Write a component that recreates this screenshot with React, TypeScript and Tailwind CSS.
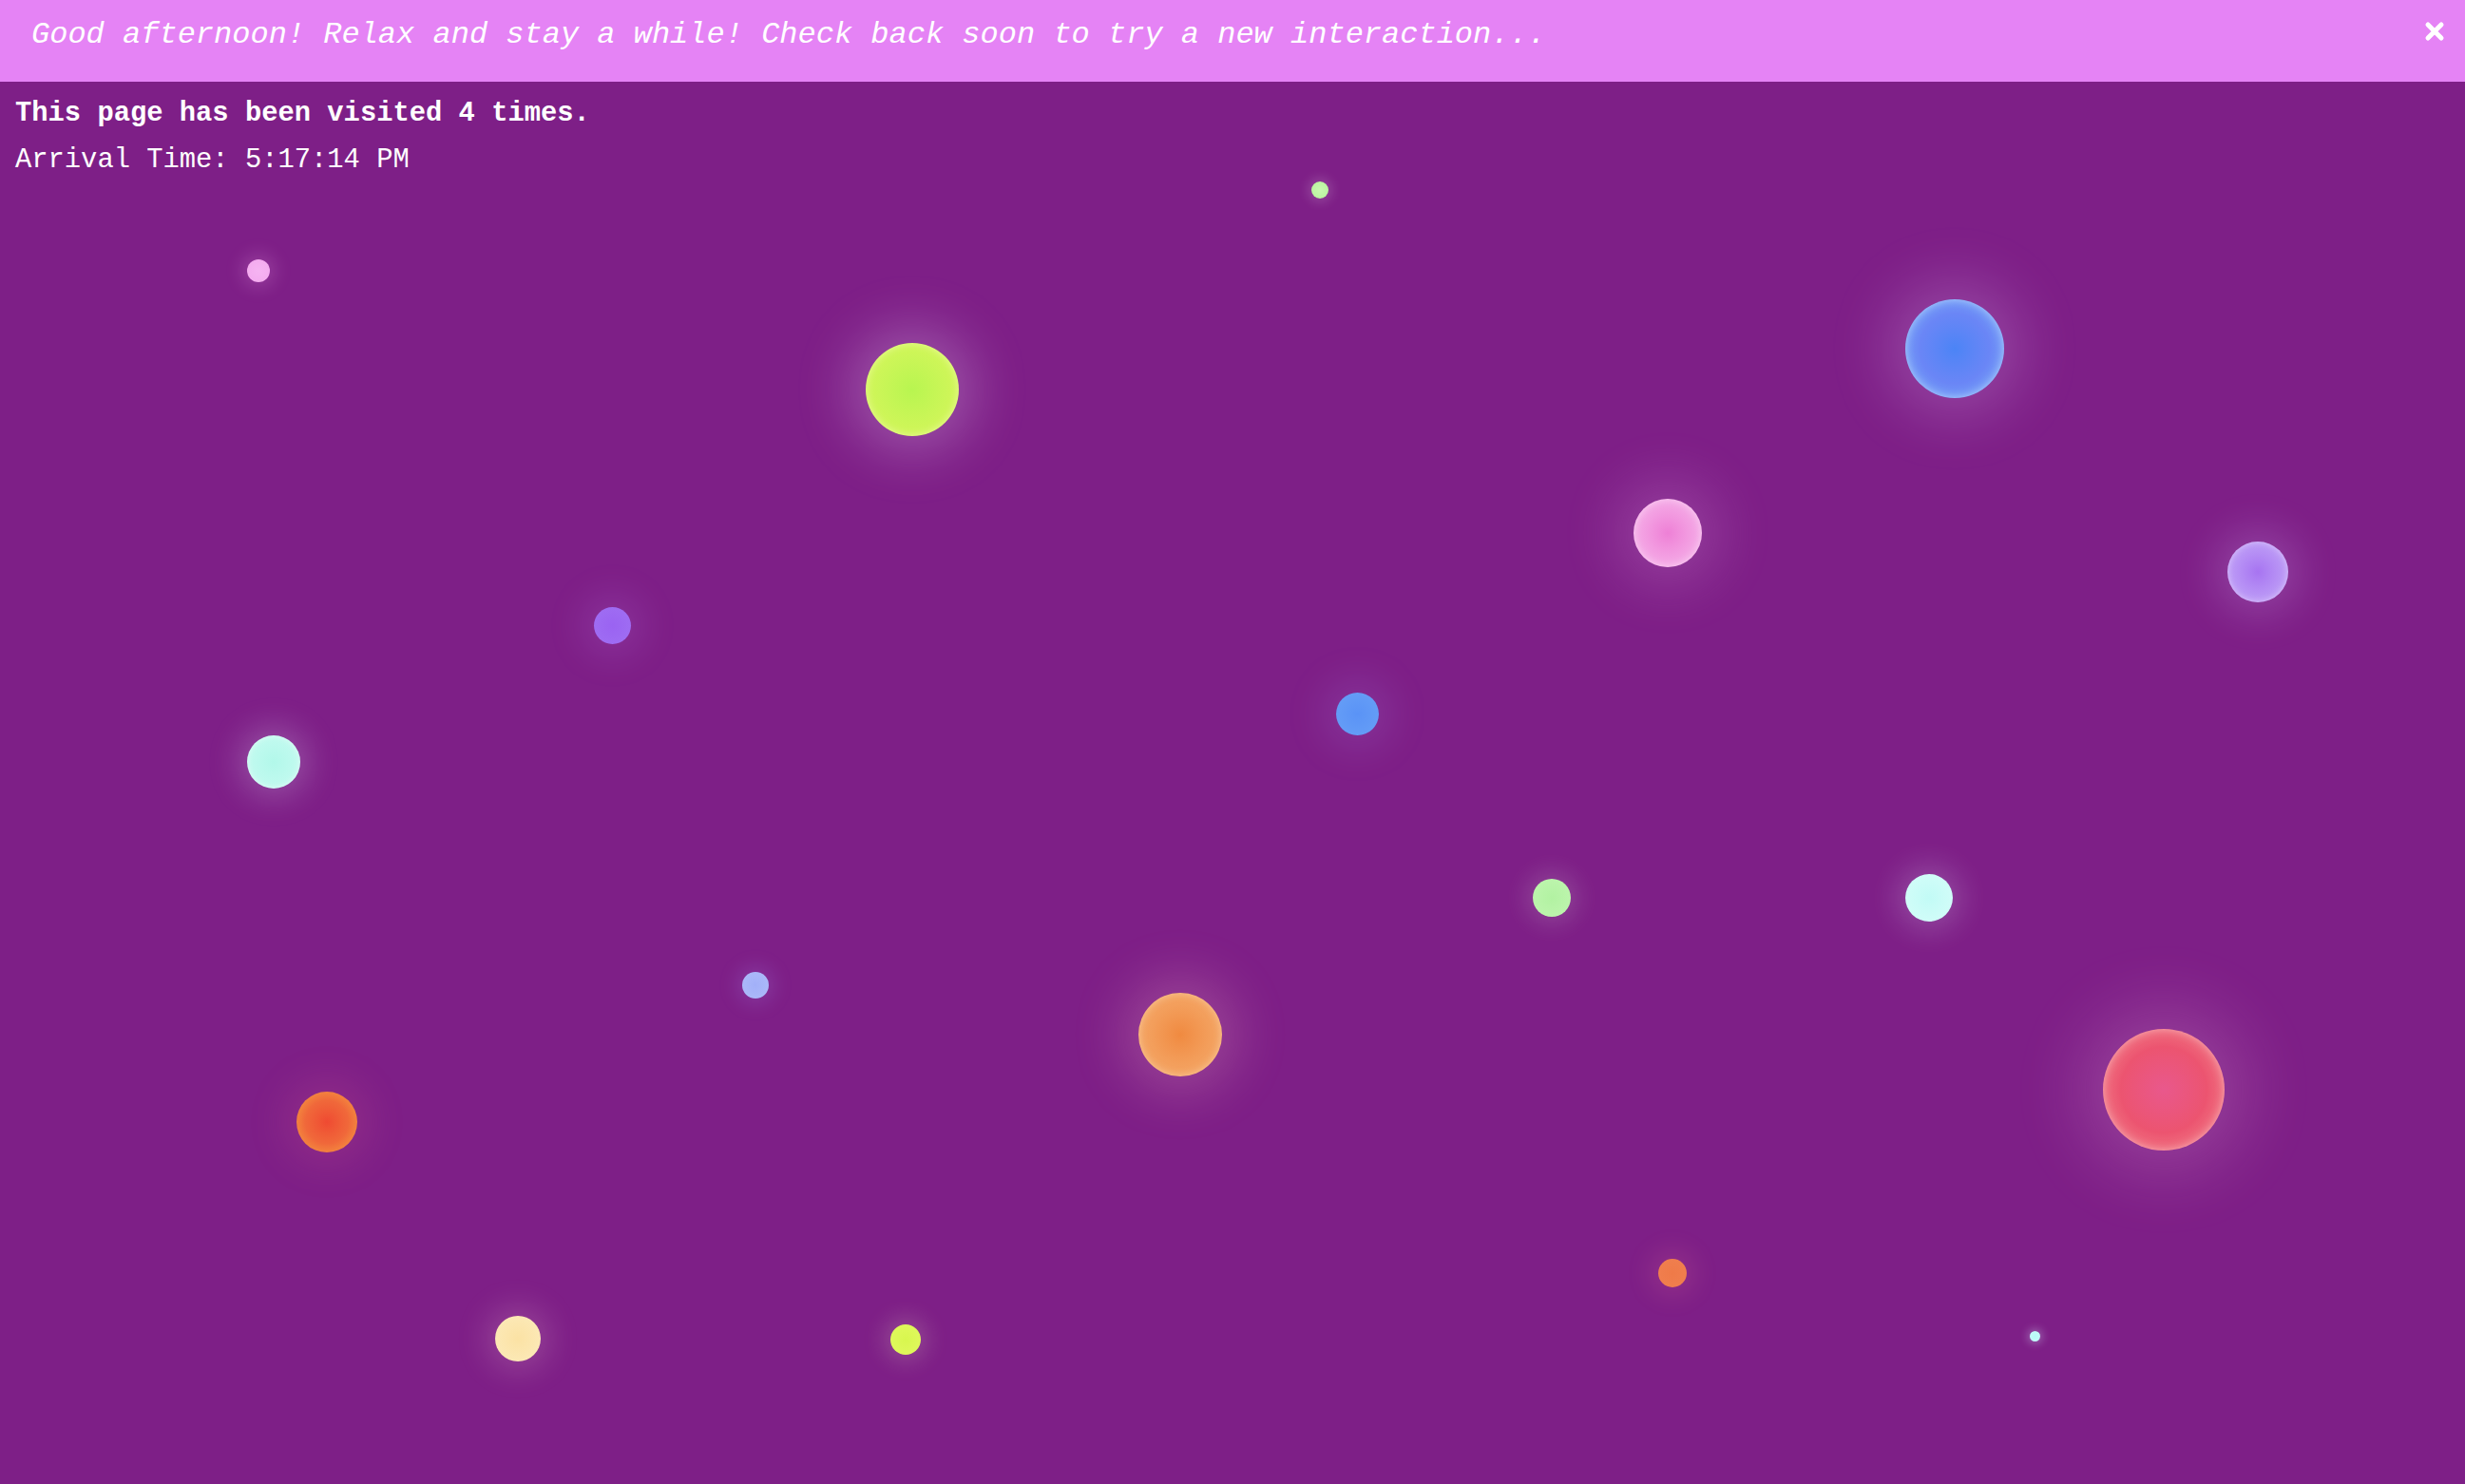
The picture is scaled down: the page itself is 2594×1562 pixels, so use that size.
const mono = "font-['Liberation_Mono','Courier_New',monospace]"

// bubbles on the canvas: left/top are the box corner, size is the diameter
const bubbles = [
    { key: 'green-sm', cls: 'left-[1380px] top-[191px] size-[18px] from-[#c9f8b0] to-[#b5f29a] shadow-[0_0_12px_4px_rgba(255,255,255,0.16)]' },
    { key: 'pink-sm', cls: 'left-[260px] top-[273px] size-[24px] from-[#f6b4f2] to-[#f3a8ee] shadow-[0_0_18px_6px_rgba(255,190,250,0.18)]' },
    { key: 'lime', cls: 'left-[911px] top-[361px] size-[98px] from-[#b8f550] to-[#dcf65e] shadow-[inset_0_0_8px_rgba(255,255,220,0.5),0_0_54px_18px_rgba(240,220,255,0.26)]' },
    { key: 'blue-lg', cls: 'left-[2005px] top-[315px] size-[104px] from-[#4b84f6] via-[#6a86f6] to-[#82b6f6] shadow-[inset_0_0_10px_rgba(200,230,255,0.7),0_0_60px_20px_rgba(230,200,255,0.22)]' },
    { key: 'pink', cls: 'left-[1719px] top-[525px] size-[72px] from-[#ee80d6] to-[#f6bdee] shadow-[inset_0_0_8px_rgba(255,230,250,0.6),0_0_56px_20px_rgba(240,180,240,0.2)]' },
    { key: 'lavender', cls: 'left-[2344px] top-[570px] size-[64px] from-[#a774f1] to-[#c8aef8] shadow-[inset_0_0_7px_rgba(235,220,255,0.6),0_0_40px_14px_rgba(220,190,255,0.2)]' },
    { key: 'violet', cls: 'left-[625px] top-[639px] size-[39px] from-[#9a63f2] to-[#a070f3] shadow-[0_0_36px_14px_rgba(200,150,255,0.15)]' },
    { key: 'blue', cls: 'left-[1406px] top-[729px] size-[45px] from-[#5a93f6] to-[#68a0f6] shadow-[0_0_40px_14px_rgba(180,170,255,0.15)]' },
    { key: 'cyan', cls: 'left-[260px] top-[774px] size-[56px] from-[#b2f8ea] to-[#c8fbf2] shadow-[inset_0_0_6px_rgba(255,255,255,0.5),0_0_32px_10px_rgba(230,230,255,0.22)]' },
    { key: 'green', cls: 'left-[1613px] top-[925px] size-[40px] from-[#b2f2a2] to-[#c0f5b0] shadow-[0_0_24px_8px_rgba(230,240,230,0.16)]' },
    { key: 'ice', cls: 'left-[2005px] top-[920px] size-[50px] from-[#c2fbf6] to-[#d6fdf9] shadow-[0_0_30px_10px_rgba(230,230,255,0.2)]' },
    { key: 'periwinkle', cls: 'left-[781px] top-[1023px] size-[28px] from-[#a2b0f8] to-[#aebcf9] shadow-[0_0_20px_6px_rgba(170,160,255,0.18)]' },
    { key: 'orange', cls: 'left-[1198px] top-[1045px] size-[88px] from-[#f08a40] to-[#f5b274] shadow-[inset_0_0_8px_rgba(255,230,200,0.5),0_0_52px_18px_rgba(250,190,200,0.22)]' },
    { key: 'red', cls: 'left-[2213px] top-[1083px] size-[128px] from-[#e9588c] via-[#ec5470] to-[#f39096] shadow-[inset_0_0_10px_rgba(255,220,220,0.55),0_0_70px_24px_rgba(250,190,230,0.2)]' },
    { key: 'red-orange', cls: 'left-[312px] top-[1149px] size-[64px] from-[#ef4a32] via-[#f0683a] to-[#f4a444] shadow-[0_0_40px_14px_rgba(250,120,140,0.14)]' },
    { key: 'orange-sm', cls: 'left-[1745px] top-[1325px] size-[30px] from-[#ef7a48] to-[#f08050] shadow-[0_0_26px_10px_rgba(255,140,150,0.14)]' },
    { key: 'cream', cls: 'left-[521px] top-[1385px] size-[48px] from-[#fbe2a4] to-[#fcebbc] shadow-[0_0_32px_10px_rgba(255,220,220,0.18)]' },
    { key: 'yellow', cls: 'left-[937px] top-[1394px] size-[32px] from-[#d8f64e] to-[#e2f860] shadow-[0_0_22px_8px_rgba(240,240,200,0.18)]' },
    { key: 'cyan-xs', cls: 'left-[2136px] top-[1401px] size-[11px] from-[#b6faf7] to-[#c8fcfa] shadow-[0_0_8px_3px_rgba(220,240,255,0.28)]' },
]

export default function App() {
    return (
        <div className={`relative min-h-screen h-[1562px] overflow-hidden bg-[#7e1f87] text-white ${mono}`}>
            <div className="absolute inset-0 pointer-events-none">
                {bubbles.map((b) => (
                    <div key={b.key} className={`absolute rounded-full bg-radial ${b.cls}`} />
                ))}
            </div>

            <div className="relative h-[86px] bg-[#e583f5] pl-[33px] pt-[19px]">
                <p className="text-[32px] leading-[36px] italic">
                    Good afternoon! Relax and stay a while! Check back soon to try a new interaction...
                </p>
                <button className="absolute right-[21px] top-[22px] w-[22px] h-[22px] flex items-center justify-center">
                    <svg viewBox="0 0 22 22" className="w-[22px] h-[22px]">
                        <path d="M4 4 L18 18 M18 4 L4 18" stroke="white" strokeWidth="5" strokeLinecap="round" fill="none" />
                    </svg>
                </button>
            </div>

            <div className="relative flex flex-col gap-[16px] pl-[16px] pt-[17px]">
                <p className="text-[28.8px] leading-[33px] font-bold">This page has been visited 4 times.</p>
                <p className="text-[28.8px] leading-[33px]">Arrival Time: 5:17:14 PM</p>
            </div>
        </div>
    )
}
